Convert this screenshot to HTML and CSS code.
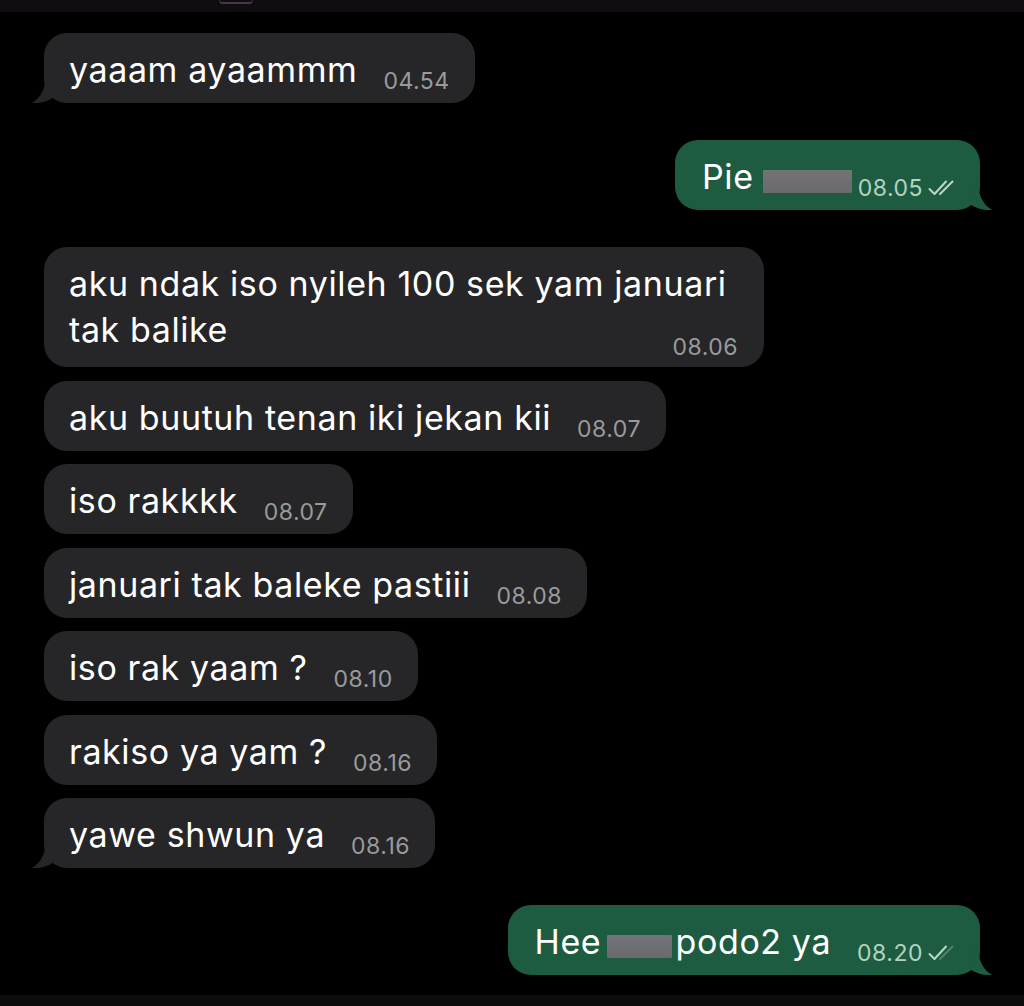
FILE: index.html
```html
<!DOCTYPE html>
<html lang="id">
<head>
<meta charset="utf-8">
<title>Chat</title>
<link rel="stylesheet" href="styles.css">
</head>
<body>
<div class="screen">
  <div class="topbar"><div class="avatar-edge"></div></div>
  <main class="chat">
    <div class="row row--in">
      <div class="bubble bubble--in">
        <span class="text">yaaam ayaammm</span><span class="meta">04.54</span>
        <svg class="tail tail--in" viewBox="0 0 26 30" width="26" height="30"><path d="M16 0 C16 14 12 24 2 30 C10 30.5 18 28.5 24 24 L26 0 Z"/></svg>
      </div>
    </div>

    <div class="row row--out row--group">
      <div class="bubble bubble--out">
        <span class="text">Pie <span class="redact redact--pie"></span></span><span class="meta meta--tight">08.05<svg class="ticks" viewBox="0 0 28 18" width="28" height="18"><path d="M1.5 10 L6.5 15 L18 2.5" /><path d="M12 15 L24.5 2.5" /></svg></span>
        <svg class="tail tail--out" viewBox="0 0 26 30" width="26" height="30"><path d="M16 0 C16 14 12 24 2 30 C10 30.5 18 28.5 24 24 L26 0 Z"/></svg>
      </div>
    </div>

    <div class="row row--in row--group">
      <div class="bubble bubble--in bubble--multi">
        <span class="text">aku ndak iso nyileh 100 sek yam januari tak balike</span><span class="meta">08.06</span>
      </div>
    </div>

    <div class="row row--in">
      <div class="bubble bubble--in"><span class="text">aku buutuh tenan iki jekan kii</span><span class="meta">08.07</span></div>
    </div>

    <div class="row row--in">
      <div class="bubble bubble--in"><span class="text">iso rakkkk</span><span class="meta">08.07</span></div>
    </div>

    <div class="row row--in">
      <div class="bubble bubble--in"><span class="text">januari tak baleke pastiii</span><span class="meta">08.08</span></div>
    </div>

    <div class="row row--in">
      <div class="bubble bubble--in"><span class="text">iso rak yaam ?</span><span class="meta">08.10</span></div>
    </div>

    <div class="row row--in">
      <div class="bubble bubble--in"><span class="text">rakiso ya yam ?</span><span class="meta">08.16</span></div>
    </div>

    <div class="row row--in">
      <div class="bubble bubble--in">
        <span class="text">yawe shwun ya</span><span class="meta">08.16</span>
        <svg class="tail tail--in" viewBox="0 0 26 30" width="26" height="30"><path d="M16 0 C16 14 12 24 2 30 C10 30.5 18 28.5 24 24 L26 0 Z"/></svg>
      </div>
    </div>

    <div class="row row--out row--group">
      <div class="bubble bubble--out">
        <span class="text">Hee <span class="redact redact--hee"></span> podo2 ya</span><span class="meta">08.20<svg class="ticks" viewBox="0 0 28 18" width="28" height="18"><path d="M1.5 10 L6.5 15 L18 2.5" /><path class="faint" d="M12 15 L24.5 2.5" /></svg></span>
        <svg class="tail tail--out" viewBox="0 0 26 30" width="26" height="30"><path d="M16 0 C16 14 12 24 2 30 C10 30.5 18 28.5 24 24 L26 0 Z"/></svg>
      </div>
    </div>
  </main>
  <div class="bottombar"></div>
</div>
</body>
</html>
```

FILE: styles.css
```css
* { box-sizing: border-box; }

html, body {
  margin: 0;
  padding: 0;
  background: #000;
}

body {
  font-family: "Inter", "Noto Sans", sans-serif;
  color: #fff;
  -webkit-font-smoothing: antialiased;
}

.screen {
  width: 1024px;
  height: 1006px;
  display: flex;
  flex-direction: column;
  background: #000;
  overflow: hidden;
}

.topbar {
  height: 12px;
  flex: 0 0 12px;
  background: #0f0d10;
  display: flex;
}

.avatar-edge {
  margin-left: 219px;
  width: 34px;
  height: 4px;
  border-bottom: 2px solid #4e3350;
  border-left: 1px solid #3a263b;
  border-right: 1px solid #3a263b;
  border-radius: 0 0 17px 17px;
}

.chat {
  flex: 1 1 auto;
  display: flex;
  flex-direction: column;
  padding: 21px 44px 0 44px;
}

.bottombar {
  height: 11px;
  flex: 0 0 11px;
  background: #0c0c0c;
}

.row {
  display: flex;
  margin-top: 13.5px;
}
.row:first-child { margin-top: 0; }
.row--group { margin-top: 37px; }
.row--in { justify-content: flex-start; }
.row--out { justify-content: flex-end; }

.bubble {
  position: relative;
  display: flex;
  align-items: flex-end;
  max-width: 720px;
  height: 70px;
  padding: 13px 25px 10px 25px;
  border-radius: 23px;
}

.bubble--in { background: #262628; }
.bubble--out { background: #1e5c41; padding-left: 27px; padding-right: 24px; }

.text {
  font-size: 34px;
  line-height: 46px;
  letter-spacing: 0.6px;
  white-space: pre-wrap;
}

.meta {
  display: inline-flex;
  align-items: center;
  margin-left: 26px;
  font-size: 23px;
  line-height: 22px;
  letter-spacing: 0.5px;
  color: #9a9a9c;
  white-space: nowrap;
  padding-bottom: 1px;
}

.bubble--out .meta { color: #b3d3c2; }
.meta--tight { margin-left: 6px; }

.bubble--multi {
  flex-direction: column;
  align-items: stretch;
  height: 120px;
  padding-top: 14px;
}
.bubble--multi .meta {
  align-self: flex-end;
  margin-left: 0;
  margin-top: -17px;
  margin-right: 1px;
}

.ticks {
  margin-left: 5px;
  fill: none;
  stroke: #b9d7c7;
  stroke-width: 2;
  stroke-linecap: round;
  stroke-linejoin: round;
}
.ticks .faint { stroke: #4f8369; }

.redact {
  display: inline-block;
  vertical-align: -4px;
  height: 23px;
  background: linear-gradient(#747478, #6a6a6e);
  border-radius: 1px;
}
.redact--pie { width: 89px; margin-left: -1px; }
.redact--hee { width: 65px; margin: 0 -7px 0 -4px; }

.tail {
  position: absolute;
  bottom: 0;
}
.bubble--in .tail { fill: #262628; }
.bubble--out .tail { fill: #1e5c41; }
.tail--in { left: -14px; }
.tail--out { right: -14px; transform: scaleX(-1); }
```
